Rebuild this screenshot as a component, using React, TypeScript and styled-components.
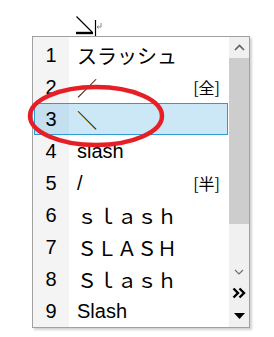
import styled, { createGlobalStyle } from "styled-components";

const GlobalStyle = createGlobalStyle`
  html, body {
    margin: 0;
    padding: 0;
    background: #fff;
  }
  body {
    font-family: "Liberation Sans", "Noto Sans CJK JP", sans-serif;
  }
`;

interface Candidate {
  text: string;
  tag?: string;
  wide?: boolean;
}

const candidates: Candidate[] = [
  { text: "スラッシュ", wide: true },
  { text: "／", tag: "[全]", wide: true },
  { text: "＼", wide: true },
  { text: "slash" },
  { text: "/", tag: "[半]" },
  { text: "ｓｌａｓｈ", wide: true },
  { text: "ＳＬＡＳＨ", wide: true },
  { text: "Ｓｌａｓｈ", wide: true },
  { text: "Slash" },
];

const Page = styled.div`
  position: relative;
  width: 274px;
  height: 337px;
  overflow: hidden;
`;

const Caret = styled.svg`
  display: block;
  margin-left: 74px;
  margin-top: 14px;
`;

const Popup = styled.div`
  margin-left: 32px;
  width: 216px;
  height: 290px;
  border: 1px solid #a0a0a0;
  background: #fff;
  display: flex;
  box-shadow: 2px 2px 2px rgba(0, 0, 0, 0.18);
`;

const List = styled.div`
  flex: 1;
  display: flex;
  flex-direction: column;
  padding-top: 2px;
  background: linear-gradient(to right, #f4f4f4 36px, #fff 36px);
`;

const Row = styled.div<{ $active?: boolean }>`
  height: 32px;
  box-sizing: border-box;
  margin: 0 1px;
  display: flex;
  align-items: center;
  border: 1px solid ${(p) => (p.$active ? "#2f9bd6" : "transparent")};
  background: ${(p) =>
    p.$active ? "linear-gradient(to right, #c3dff0 34px, #cce8f6 34px)" : "transparent"};
`;

const Num = styled.span`
  width: 32px;
  text-align: center;
  font-size: 20px;
  color: #000;
`;

const Word = styled.span<{ $wide?: boolean }>`
  flex: 1;
  margin-left: 10px;
  font-size: 20px;
  color: #000;
  font-family: ${(p) =>
    p.$wide ? '"Noto Sans CJK JP", sans-serif' : '"Liberation Sans", sans-serif'};
  white-space: nowrap;
`;

const Tag = styled.span`
  font-family: "Noto Sans CJK JP", sans-serif;
  font-size: 16px;
  margin-right: 7px;
  color: #000;
`;

const Scroll = styled.div`
  width: 20px;
  display: flex;
  flex-direction: column;
  background: #f0f0f0;
`;

const Btn = styled.div<{ $h: number }>`
  height: ${(p) => p.$h}px;
  display: flex;
  align-items: center;
  justify-content: center;
`;

const Thumb = styled.div`
  height: 166px;
  background: #cdcdcd;
`;

const Track = styled.div`
  flex: 1;
`;

const Ring = styled.svg`
  position: absolute;
  left: 26px;
  top: 82px;
  pointer-events: none;
`;

export default function App() {
  return (
    <Page>
      <GlobalStyle />
      <Caret width="30" height="22" viewBox="0 0 30 22">
        <line x1="2.5" y1="2.5" x2="18" y2="18" stroke="#000" strokeWidth="1.2" />
        <line x1="2" y1="19" x2="19" y2="19" stroke="#000" strokeWidth="2.4" />
        <line x1="21.5" y1="6" x2="21.5" y2="22" stroke="#000" strokeWidth="1.2" />
        <path d="M27 9 V13 H23 M24.5 11.5 L23 13 L24.5 14.5" stroke="#888" strokeWidth="1" fill="none" />
      </Caret>
      <Popup>
        <List>
          {candidates.map((c, i) => (
            <Row key={i} $active={i === 2}>
              <Num>{i + 1}</Num>
              <Word $wide={c.wide}>{c.text}</Word>
              {c.tag && <Tag>{c.tag}</Tag>}
            </Row>
          ))}
        </List>
        <Scroll>
          <Btn $h={21}>
            <svg width="11" height="7" viewBox="0 0 11 7">
              <path d="M1 6 L5.5 1.5 L10 6" stroke="#606060" strokeWidth="1.6" fill="none" />
            </svg>
          </Btn>
          <Thumb />
          <Track />
          <Btn $h={20}>
            <svg width="10" height="6" viewBox="0 0 10 6">
              <path d="M1 1 L5 5 L9 1" stroke="#707070" strokeWidth="1.2" fill="none" />
            </svg>
          </Btn>
          <Btn $h={22}>
            <svg width="14" height="12" viewBox="0 0 14 12">
              <path d="M1.5 1.5 L6 6 L1.5 10.5 M7.5 1.5 L12 6 L7.5 10.5" stroke="#000" strokeWidth="2.4" fill="none" />
            </svg>
          </Btn>
          <Btn $h={23}>
            <svg width="11" height="6" viewBox="0 0 11 6">
              <path d="M0 0 H11 L5.5 6 Z" fill="#000" />
            </svg>
          </Btn>
        </Scroll>
      </Popup>
      <Ring width="144" height="70" viewBox="0 0 144 70">
        <ellipse cx="70" cy="34" rx="66" ry="29" stroke="#e61e25" strokeWidth="4.5" fill="none" />
      </Ring>
    </Page>
  );
}
